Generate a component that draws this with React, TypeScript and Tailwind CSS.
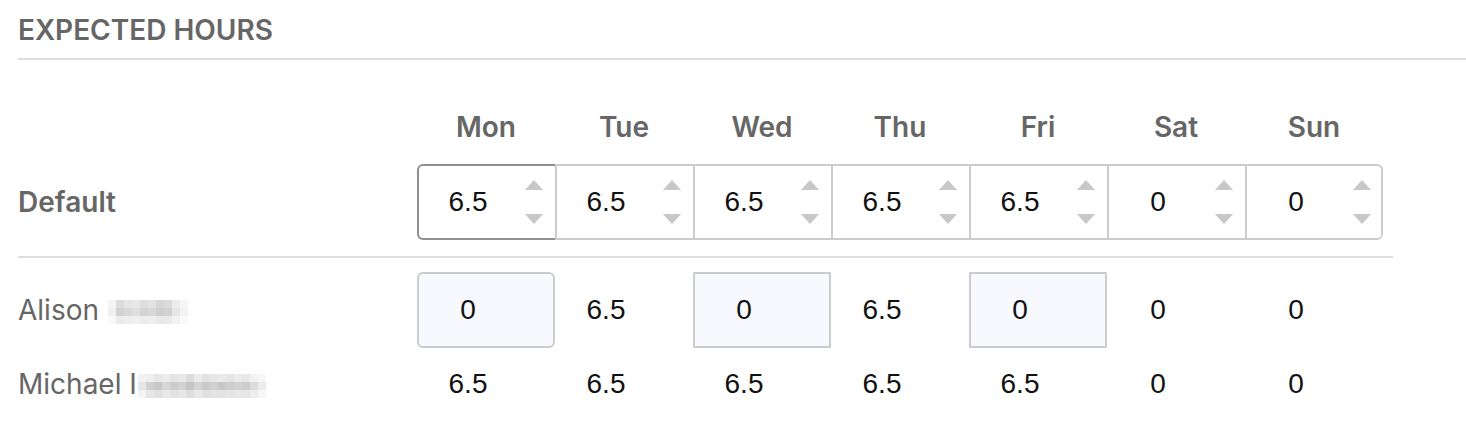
import React from "react"

const days = ["Mon", "Tue", "Wed", "Thu", "Fri", "Sat", "Sun"]
const defaults = ["6.5", "6.5", "6.5", "6.5", "6.5", "0", "0"]

// pixelated name blur, one class per tile
const alisonTiles = [
  ["bg-[#f4f4f4]", "bg-[#dcdcdc]", "bg-[#e4e4e4]", "bg-[#e8e8e8]", "bg-[#dedede]", "bg-[#e2e2e2]", "bg-[#d6d6d6]", "bg-[#dadada]", "bg-[#ececec]", "bg-[#f6f6f6]"],
  ["bg-[#f0f0f0]", "bg-[#d2d2d2]", "bg-[#d8d8d8]", "bg-[#e0e0e0]", "bg-[#d4d4d4]", "bg-[#d8d8d8]", "bg-[#cecece]", "bg-[#d2d2d2]", "bg-[#e6e6e6]", "bg-[#f2f2f2]"],
  ["bg-[#f8f8f8]", "bg-[#eaeaea]", "bg-[#eeeeee]", "bg-[#f0f0f0]", "bg-[#ececec]", "bg-[#eeeeee]", "bg-[#e8e8e8]", "bg-[#eaeaea]", "bg-[#f2f2f2]", "bg-[#fafafa]"],
]

const michaelTiles = [
  ["bg-[#f2f2f2]", "bg-[#eeeeee]", "bg-[#e6e6e6]", "bg-[#ececec]", "bg-[#e4e4e4]", "bg-[#e8e8e8]", "bg-[#dcdcdc]", "bg-[#ececec]", "bg-[#e2e2e2]", "bg-[#e6e6e6]", "bg-[#eaeaea]", "bg-[#e4e4e4]", "bg-[#ececec]", "bg-[#e8e8e8]", "bg-[#f2f2f2]", "bg-[#f6f6f6]"],
  ["bg-[#e6e6e6]", "bg-[#d0d0d0]", "bg-[#c8c8c8]", "bg-[#d6d6d6]", "bg-[#cccccc]", "bg-[#d2d2d2]", "bg-[#c6c6c6]", "bg-[#d4d4d4]", "bg-[#cacaca]", "bg-[#d0d0d0]", "bg-[#c8c8c8]", "bg-[#cecece]", "bg-[#d2d2d2]", "bg-[#cccccc]", "bg-[#dcdcdc]", "bg-[#ececec]"],
  ["bg-[#f4f4f4]", "bg-[#e6e6e6]", "bg-[#e0e0e0]", "bg-[#e8e8e8]", "bg-[#e2e2e2]", "bg-[#e6e6e6]", "bg-[#dedede]", "bg-[#e8e8e8]", "bg-[#e0e0e0]", "bg-[#e4e4e4]", "bg-[#e2e2e2]", "bg-[#e4e4e4]", "bg-[#e8e8e8]", "bg-[#e6e6e6]", "bg-[#eeeeee]", "bg-[#f6f6f6]"],
]

const people = [
  {
    name: "Alison",
    tiles: alisonTiles,
    hours: ["0", "6.5", "0", "6.5", "0", "0", "0"],
    boxed: [0, 2, 4],
  },
  {
    name: "Michael I",
    tiles: michaelTiles,
    hours: ["6.5", "6.5", "6.5", "6.5", "6.5", "0", "0"],
    boxed: [] as number[],
  },
]

function Mosaic({ tiles }: { tiles: string[][] }) {
  return (
    <span className="inline-flex flex-col align-middle">
      {tiles.map((row, r) => (
        <span key={r} className="flex">
          {row.map((c, i) => (
            <span key={i} className={`block w-[8px] h-[8px] ${c}`} />
          ))}
        </span>
      ))}
    </span>
  )
}

function Spinner() {
  return (
    <div className="flex flex-col items-center gap-[24px]">
      <svg width="18" height="10" viewBox="0 0 18 10">
        <path d="M9 0.5 L17.5 10 L0.5 10 Z" fill="#c8c8c8" strokeLinejoin="round" stroke="#c8c8c8" strokeWidth="1" />
      </svg>
      <svg width="18" height="10" viewBox="0 0 18 10">
        <path d="M0.5 0 L17.5 0 L9 9.5 Z" fill="#c8c8c8" strokeLinejoin="round" stroke="#c8c8c8" strokeWidth="1" />
      </svg>
    </div>
  )
}

export default function App() {
  return (
    <div className="bg-white w-[1466px] h-[434px] pl-[18px] font-['Inter',sans-serif]">
      <div className="pt-[11px]">
        <h2 className="text-[28px] leading-[39px] font-semibold text-[#666666] pb-[8px]">EXPECTED HOURS</h2>
        <div className="h-[2px] bg-[#dddddd]" />
      </div>

      {/* day headers */}
      <div className="flex mt-[47px] h-[40px] items-center">
        <div className="w-[399px]" />
        {days.map((d) => (
          <div key={d} className="w-[138px] text-center text-[28px] leading-[40px] font-semibold text-[#666666]">
            {d}
          </div>
        ))}
      </div>

      {/* default row */}
      <div className="flex mt-[17px] h-[76px] items-center">
        <div className="w-[399px] text-[28px] font-semibold text-[#666666]">Default</div>
        <div className="flex h-[76px]">
          {defaults.map((v, i) => (
            <div
              key={i}
              className={`w-[138px] h-[76px] flex items-center border-y-2 border-l-2 font-['Liberation_Sans',Arial,sans-serif] text-[28px] text-[#111111] ${
                i === 0 ? "border-[#8f8f8f] rounded-l-[6px]" : "border-[#cccccc]"
              } ${i === 6 ? "border-r-2 rounded-r-[6px]" : ""}`}
            >
              <div className="w-[98px] text-center">{v}</div>
              <div className="w-[34px] flex justify-center">
                <Spinner />
              </div>
            </div>
          ))}
        </div>
      </div>

      <div className="mt-[16px] h-[2px] w-[1375px] bg-[#dddddd]" />

      {/* people */}
      {people.map((p, idx) => (
        <div key={p.name} className={`flex items-center ${idx === 0 ? "mt-[14px] h-[76px]" : "mt-[16px] h-[40px]"}`}>
          <div className="w-[399px] flex items-center text-[28px] text-[#666666]">
            <span>{p.name}</span>
            <span className={idx === 0 ? "ml-[9px]" : "ml-[1px]"}>
              <Mosaic tiles={p.tiles} />
            </span>
          </div>
          {p.hours.map((h, i) => {
            const boxed = p.boxed.includes(i)
            return (
              <div
                key={i}
                className={`w-[138px] h-[76px] flex items-center border-2 font-['Liberation_Sans',Arial,sans-serif] text-[28px] text-[#111111] ${
                  boxed ? "border-[#cccccc] bg-[#f8f9ff]" : "border-transparent"
                } ${boxed && i === 0 ? "rounded-[6px]" : "rounded-[1px]"} ${idx === 1 ? "h-[40px]" : ""}`}
              >
                <div className="w-[98px] text-center">{h}</div>
              </div>
            )
          })}
        </div>
      ))}
    </div>
  )
}
